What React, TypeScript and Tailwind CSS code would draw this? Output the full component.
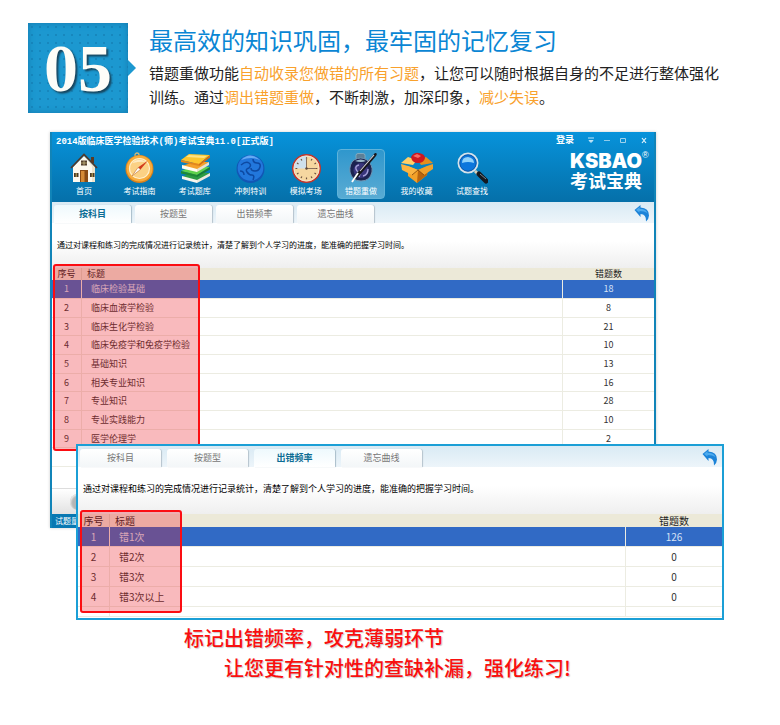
import React from "react";

const NAV = ["首页", "考试指南", "考试题库", "冲刺特训", "模拟考场", "错题重做", "我的收藏", "试题查找"];
const TABS = ["按科目", "按题型", "出错频率", "遗忘曲线"];
const SUBJECTS: [string, string][] = [
  ["临床检验基础", "18"],
  ["临床血液学检验", "8"],
  ["临床生化学检验", "21"],
  ["临床免疫学和免疫学检验", "10"],
  ["基础知识", "13"],
  ["相关专业知识", "16"],
  ["专业知识", "28"],
  ["专业实践能力", "10"],
  ["医学伦理学", "2"],
];
const FREQUENCY: [string, string][] = [
  ["错1次", "126"],
  ["错2次", "0"],
  ["错3次", "0"],
  ["错3次以上", "0"],
];
const INTRO = "通过对课程和练习的完成情况进行记录统计，清楚了解到个人学习的进度，能准确的把握学习时间。";

function NavIcon({ index }: { index: number }) {
  const drawings = [
    <g key="home">
      <rect x="23" y="5" width="3" height="6" fill="#5d3a22" />
      <path d="M5 15 16 4l11 11v15H5z" fill="#fdf9ee" />
      <path d="M16 4l11 11v15h-3V14z" fill="#efe4cc" />
      <path d="M3 16 16 2.500 29 16" fill="none" stroke="#4f3a2c" strokeWidth="1.800" />
      <rect x="13" y="8.500" width="6" height="5" fill="#54402c" />
      <path d="M16 8.500v5M13 11h6" stroke="#d9c88a" strokeWidth=".7" />
      <rect x="12" y="18" width="8" height="12" fill="#8a4b14" />
      <rect x="13" y="19" width="3.500" height="11" fill="#d58a35" />
      <rect x="6" y="21" width="4.500" height="4" fill="#4a3a28" />
      <rect x="22" y="21" width="4.500" height="4" fill="#4a3a28" />
      <path d="M8.200 21v4M24.200 21v4" stroke="#e9c965" strokeWidth=".8" />
    </g>,
    <g key="compass">
      <circle cx="14" cy="3" r="2" fill="none" stroke="#d3b878" strokeWidth="1.300" />
      <circle cx="16.500" cy="17" r="14" fill="#d9811c" />
      <circle cx="16.500" cy="16.500" r="13" fill="#f8ad3c" />
      <circle cx="16.500" cy="16.500" r="10" fill="#fbd184" stroke="#fff0cd" strokeWidth="1.200" />
      <path d="M9 11q6-6 14-1-6-1-14 1z" fill="#fdebc4" />
      <path d="m25 8.500-7.500 9-2.500-2z" fill="#d23a1c" />
      <path d="m9 24 6-8.500 2.500 2z" fill="#fff" stroke="#c0702c" strokeWidth=".6" />
    </g>,
    <g key="books">
      <path d="m3 25 11-5 17 1-12 8z" fill="#2b9a43" />
      <path d="m3 24 15 4v3L3 27z" fill="#f7f5ee" />
      <path d="m18 28 13-7v3l-13 7z" fill="#ece9dd" />
      <path d="m2 19 12-5 17 1-13 8z" fill="#5fd14d" />
      <path d="m2 19 16 4v2L2 21.500z" fill="#1e8a35" />
      <path d="m18 23 13-8v2.500L18 25z" fill="#167c35" />
      <path d="m3 14 12-4 15 0-12 8z" fill="#f4a02a" />
      <path d="m3 13 15 4v3L3 16.500z" fill="#fffbef" />
      <path d="m18 17 12-7v3l-12 7z" fill="#e8e2d0" />
      <path d="m2 8 8-6 21 1-11 9z" fill="#fdc62d" />
      <path d="m10 3 18 1-3 2-18-1z" fill="#ffe283" />
      <path d="m2 8 18 4v2L2 10z" fill="#e2871b" />
      <path d="m20 12 11-9v2.500L20 14z" fill="#d46f14" />
    </g>,
    <g key="globe">
      <circle cx="16.500" cy="17" r="14" fill="#1257b5" />
      <circle cx="16.500" cy="16" r="12.800" fill="#2277dc" />
      <path d="M7 8q9-9 19 0-8-4-19 0z" fill="#66aaf2" />
      <path d="M7 13q5-4 8-2t0 5q-4 1-2 4t5 3 1 5M19 7q0 4 4 4t3 4-5 4-4-3M6 19q4 0 4 4" fill="none" stroke="#0d49a2" strokeWidth="1.500" />
    </g>,
    <g key="clock">
      <circle cx="16.500" cy="16.500" r="14.500" fill="#c3372c" />
      <circle cx="16.500" cy="16.500" r="12.700" fill="#f6d7a0" stroke="#f8efe2" strokeWidth=".8" />
      <path d="M16.500 16.500V4A12.500 12.500 0 0 0 4 16.500z" fill="#cfe0ec" />
      <path d="M16.500 5.500v1.800M16.500 25.500v1.800M5.500 16.500h1.800M25.500 16.500h1.800M22 7l-.9 1.500M26 11l-1.500.9M26 22l-1.500-.9M22 26l-.9-1.500M11 26l.9-1.500M7 22l1.500-.9M7 11l1.500.9M11 7l.9 1.500" stroke="#6b5140" strokeWidth="1.200" />
      <path d="M16.500 5v11.500H26" fill="none" stroke="#8a705c" strokeWidth="1" />
      <circle cx="16.500" cy="16.500" r="1.200" fill="#5b463a" />
    </g>,
    <g key="ink">
      <rect x="11" y="1.500" width="9" height="6" rx="2" fill="#5d7f96" stroke="#8fb0c2" strokeWidth=".8" />
      <path d="M9 8q7-4 13 0 6 5 5 12-2 9-11 9T5 20Q4 12 9 8z" fill="#1c2350" stroke="#6e93b0" />
      <path d="M10 9q6-3 11 0-5 2-11 0z" fill="#9db9cb" />
      <circle cx="16" cy="18.500" r="7.500" fill="#39357c" />
      <path d="M14 13q-4 1-3 4t3 3 0 5M18 24q5-1 5-7" fill="none" stroke="#a4a0d8" strokeWidth="1.400" />
      <path d="M30 1q3 0 1 3L14 24l-7 6 4-8z" fill="#17161b" />
      <path d="M29 3 15 19" stroke="#d8d8e2" strokeWidth="1.100" />
      <path d="m13 21-6 9" stroke="#fff" strokeWidth="1.800" />
    </g>,
    <g key="box">
      <path d="m7 14 10 4 10-4-1 9-10 8-9-7z" fill="#f3a128" />
      <path d="m17 18 10-4-1 9-10 8z" fill="#b9650e" />
      <path d="m7 5 9 3-4 5-12-2z" fill="#ffcf67" />
      <path d="m25 5-8 3 3 5 12-2z" fill="#e58e1c" />
      <path d="m0 12 7 2 10 4-6 5-10-5z" fill="#fbb440" />
      <path d="m32 12-6 2-9 4 6 5 9-6z" fill="#f0a12b" />
      <path d="M10 5q3-5 8-4 6 1 6 5-1 5-7 5t-7-6z" fill="#cd1820" />
      <path d="m12 4 4-2 4 2-3 2z" fill="#f86a63" />
      <path d="m17 18-6 5M17 18l6 5" stroke="#7e420a" strokeWidth=".8" />
    </g>,
    <g key="search">
      <path d="m19 19 4 4" stroke="#d8cfb8" strokeWidth="3" />
      <path d="m23 22 7 7" stroke="#14181f" strokeWidth="5" strokeLinecap="round" />
      <path d="m24 22 6 5" stroke="#7b8690" strokeWidth="1" />
      <circle cx="12" cy="11" r="9.500" fill="#0c76dc" stroke="#d5e2ea" strokeWidth="2" />
      <circle cx="12" cy="11" r="8.200" fill="none" stroke="#0b56a8" />
      <path d="M6 11q0-6 6-6 6 1 6 6-6-2-12 0z" fill="#8fd2fb" />
    </g>,
  ];
  return (
    <svg viewBox="0 0 32 32" className="h-8 w-8" aria-hidden="true">
      {drawings[index]}
    </svg>
  );
}

function BackButton() {
  return (
    <button type="button" aria-label="返回" className="h-[18px] w-4">
      <svg viewBox="0 0 16 18" className="h-[18px] w-4" aria-hidden="true">
        <path d="M.5 6 6.500 1v2.500q8.500.5 8.500 8 0 3-3 6 .5-7.500-5.500-7.500v3z" fill="#1c83d8" />
        <path d="M2 6l3.500-3v1.800q6 0 8 4.200-3-2-8-2v1.500z" fill="#4dabee" />
      </svg>
    </button>
  );
}

function TabBar({ active, wide }: { active: number; wide?: boolean }) {
  return (
    <div className="flex h-[21px] items-end justify-between bg-linear-to-b from-[#d9eaf4] to-[#edf5fa] pr-1">
      <div className={wide ? "flex gap-[6px] pl-[2px]" : "flex gap-1 pl-[2px]"} role="tablist">
        {TABS.map((tab, i) => (
          <button
            key={tab}
            type="button"
            role="tab"
            aria-selected={i === active}
            className={[
              "h-[18px] rounded-t-[3px] text-[9px] leading-[18px]",
              wide ? "w-[81px]" : "w-[77px]",
              i === active
                ? "bg-linear-to-b from-[#eef9fd] to-white font-bold text-[#0b6c94] shadow-[1px_0_1px_#a9bdc9]"
                : "bg-linear-to-b from-white to-[#f3f6f8] text-[#777] shadow-[1px_0_1px_#b5c3cc]",
            ].join(" ")}
          >
            {tab}
          </button>
        ))}
      </div>
      <div className="flex self-center">
        <BackButton />
      </div>
    </div>
  );
}

function ErrorTable({ rows, wide }: { rows: [string, string][]; wide?: boolean }) {
  const rowHeight = wide ? "h-5" : "h-[19px] nth-[3n]:h-[18px]";
  return (
    <table
      className={
        "w-full table-fixed border-separate border-spacing-0 text-[#333] " +
        (wide ? "text-[10px] leading-3" : "text-[9px] leading-3")
      }
    >
      <colgroup>
        <col className={wide ? "w-8" : "w-[30px]"} />
        <col />
        <col className={wide ? "w-24" : "w-[91px]"} />
      </colgroup>
      <thead className="bg-[#ece9d8] text-[#222]">
        <tr className={wide ? "h-[13px]" : "h-3"}>
          <th className="border-r border-[#d8d4c0] p-0 font-normal">序号</th>
          <th className="p-0 pl-[5px] text-left font-normal">标题</th>
          <th className="p-0 font-normal">错题数</th>
        </tr>
      </thead>
      <tbody>
        {rows.map(([title, count], i) => (
          <tr key={title} className={rowHeight + (i === 0 ? " bg-[#316ac5] text-[#d6e2f5]" : "")}>
            <td className="border-r border-b border-[#ecece2] p-0 text-center">{i + 1}</td>
            <td className="border-r border-b border-[#ecece2] p-0 pl-[9px]">{title}</td>
            <td className="border-b border-[#ecece2] p-0 text-center">{count}</td>
          </tr>
        ))}
        <tr className={wide ? "h-[10px]" : "h-[19px]"}>
          <td className="border-r border-b border-[#ecece2] p-0" />
          <td className="border-r border-b border-[#ecece2] p-0" />
          <td className="border-b border-[#ecece2] p-0" />
        </tr>
      </tbody>
    </table>
  );
}

function TitleBar() {
  return (
    <header className="flex h-[70px] justify-between bg-linear-to-b from-[#0793db] to-[#0570a9] text-white">
      <div className="pt-[3px]">
        <h2 className="pl-1 font-['Liberation_Mono','Noto_Sans_CJK_SC',monospace] text-[9px] leading-[14px] font-bold">
          2014版临床医学检验技术(师)考试宝典11.0[正式版]
        </h2>
        <nav className="ml-2 flex w-[436px] justify-between">
          {NAV.map((label, i) => (
            <button
              key={label}
              type="button"
              className={
                "flex h-[50px] w-12 flex-col items-center rounded pt-[2px] text-[8px] leading-[14px] " +
                (i === 5
                  ? "border border-[#5fb3da] bg-linear-to-b from-[#2f97cd] to-[#58abd3]"
                  : "border border-transparent")
              }
            >
              <NavIcon index={i} />
              <span className="whitespace-nowrap">{label}</span>
            </button>
          ))}
        </nav>
      </div>
      <div className="flex flex-col items-end pt-[2px]">
        <div className="flex h-3 items-center gap-[9px] pr-[6px] text-[9px] leading-3">
          <button type="button" className="mr-1 font-bold">登录</button>
          <button type="button" aria-label="菜单">
            <svg viewBox="0 0 8 8" className="h-2 w-2" aria-hidden="true">
              <path d="M1 2h6M2 4.500h4L4 6.500z" fill="#bfe4f7" stroke="#bfe4f7" />
            </svg>
          </button>
          <button type="button" aria-label="最小化">
            <svg viewBox="0 0 6 8" className="h-2 w-[6px]" aria-hidden="true">
              <path d="M0 4.500h6" stroke="#8fcbea" />
            </svg>
          </button>
          <button type="button" aria-label="最大化">
            <svg viewBox="0 0 8 8" className="h-2 w-2" aria-hidden="true">
              <path d="M1.500 2.500h5v4h-5z" fill="none" stroke="#9fd2ec" />
            </svg>
          </button>
          <button type="button" aria-label="关闭" className="ml-1">
            <svg viewBox="0 0 8 8" className="h-2 w-2" aria-hidden="true">
              <path d="m2 2 4 5M6 2 2 7" stroke="#e3f4fc" strokeWidth="1.200" />
            </svg>
          </button>
        </div>
        <div className="flex pt-[5px] pr-2">
          <div className="text-center">
            <div className="font-[Inter,'Liberation_Sans',sans-serif] text-[20px] leading-5 font-black">KSBAO</div>
            <div className="text-[18px] leading-[18px] font-bold">考试宝典</div>
          </div>
          <span className="w-1 font-['Liberation_Sans',sans-serif] text-[9px] leading-[8px]">®</span>
        </div>
      </div>
    </header>
  );
}

export default function App() {
  return (
    <main className="bg-white pt-[23px] pb-10 font-['Noto_Sans_CJK_SC',sans-serif]">
      <section className="flex h-[109px] gap-[13px] pr-[49px] pl-7">
        <div className="flex shrink-0 items-center self-start">
          <div className="flex h-[90px] w-[100px] items-center justify-center bg-[#1c98d0] bg-[radial-gradient(#1787bd_1px,transparent_1px)] bg-size-[8px_8px] shadow-[inset_0_0_6px_#1479ad]">
            <span className="font-['Liberation_Serif',serif] text-[68px] leading-[90px] font-bold text-[#fdfdf8] [text-shadow:2px_2px_2px_#17445c]">
              05
            </span>
          </div>
          <svg viewBox="0 0 8 16" className="h-4 w-2" aria-hidden="true">
            <path d="M0 0 8 8 0 16z" fill="#1c98d0" />
          </svg>
        </div>
        <div>
          <h1 className="text-[24px] leading-[34px] font-normal text-[#0a86d4]">最高效的知识巩固，最牢固的记忆复习</h1>
          <p className="pt-1 text-[15px] leading-6 text-[#222]">
            错题重做功能<span className="text-[#f9a12c]">自动收录您做错的所有习题</span>
            ，让您可以随时根据自身的不足进行整体强化训练。通过<span className="text-[#f9a12c]">调出错题重做</span>
            ，不断刺激，加深印象，<span className="text-[#f9a12c]">减少失误</span>。
          </p>
        </div>
      </section>

      <section className="mr-[124px] ml-[50px] border-x-2 border-[#1184b8] shadow-[0_0_3px_#ccc]">
        <TitleBar />
        <TabBar active={0} />
        <p className="h-[45px] bg-linear-to-b from-white from-40% to-[#efefef] pt-[15px] pl-[5px] text-[8px] leading-[14px] text-black">
          {INTRO}
        </p>
        <div className="relative h-[220px] bg-white">
          <ErrorTable rows={SUBJECTS} />
          <div className="absolute -top-1 left-px h-[187px] w-[147px] rounded-[3px] border-2 border-[#fb0d12] bg-[#eb1c24]/30" />
        </div>
        <div className="flex h-[26px] items-center border-t border-[#ddd] bg-linear-to-b from-white to-[#e2e2e2] pl-[18px]">
          <span className="h-4 w-4 rounded-full bg-[#b5b5b5] shadow-[inset_1px_1px_2px_#eee]" />
        </div>
        <footer className="h-[14px] bg-[#0878b2] pl-[3px] text-[8px] leading-[14px] text-white">试题量</footer>
      </section>

      <section className="relative -mt-[84px] mr-14 ml-[76px] border-2 border-[#1b9fd6] bg-white">
        <TabBar active={2} wide />
        <p className="h-[47px] bg-linear-to-b from-white from-40% to-[#efefef] pt-[15px] pl-[5px] text-[9px] leading-[14px] text-black">
          {INTRO}
        </p>
        <div className="relative h-[104px]">
          <ErrorTable rows={FREQUENCY} wide />
          <div className="absolute -top-1 left-[2px] h-[103px] w-[102px] rounded-[3px] border-2 border-[#fb0d12] bg-[#eb1c24]/30" />
        </div>
      </section>

      <section className="pt-[3px] pl-[184px] text-[20px] leading-[30px] font-medium text-[#f90f0f] [text-shadow:1px_1px_1px_#ccc]">
        <p>标记出错频率，攻克薄弱环节</p>
        <p className="pl-10">让您更有针对性的查缺补漏，强化练习!</p>
      </section>
    </main>
  );
}
